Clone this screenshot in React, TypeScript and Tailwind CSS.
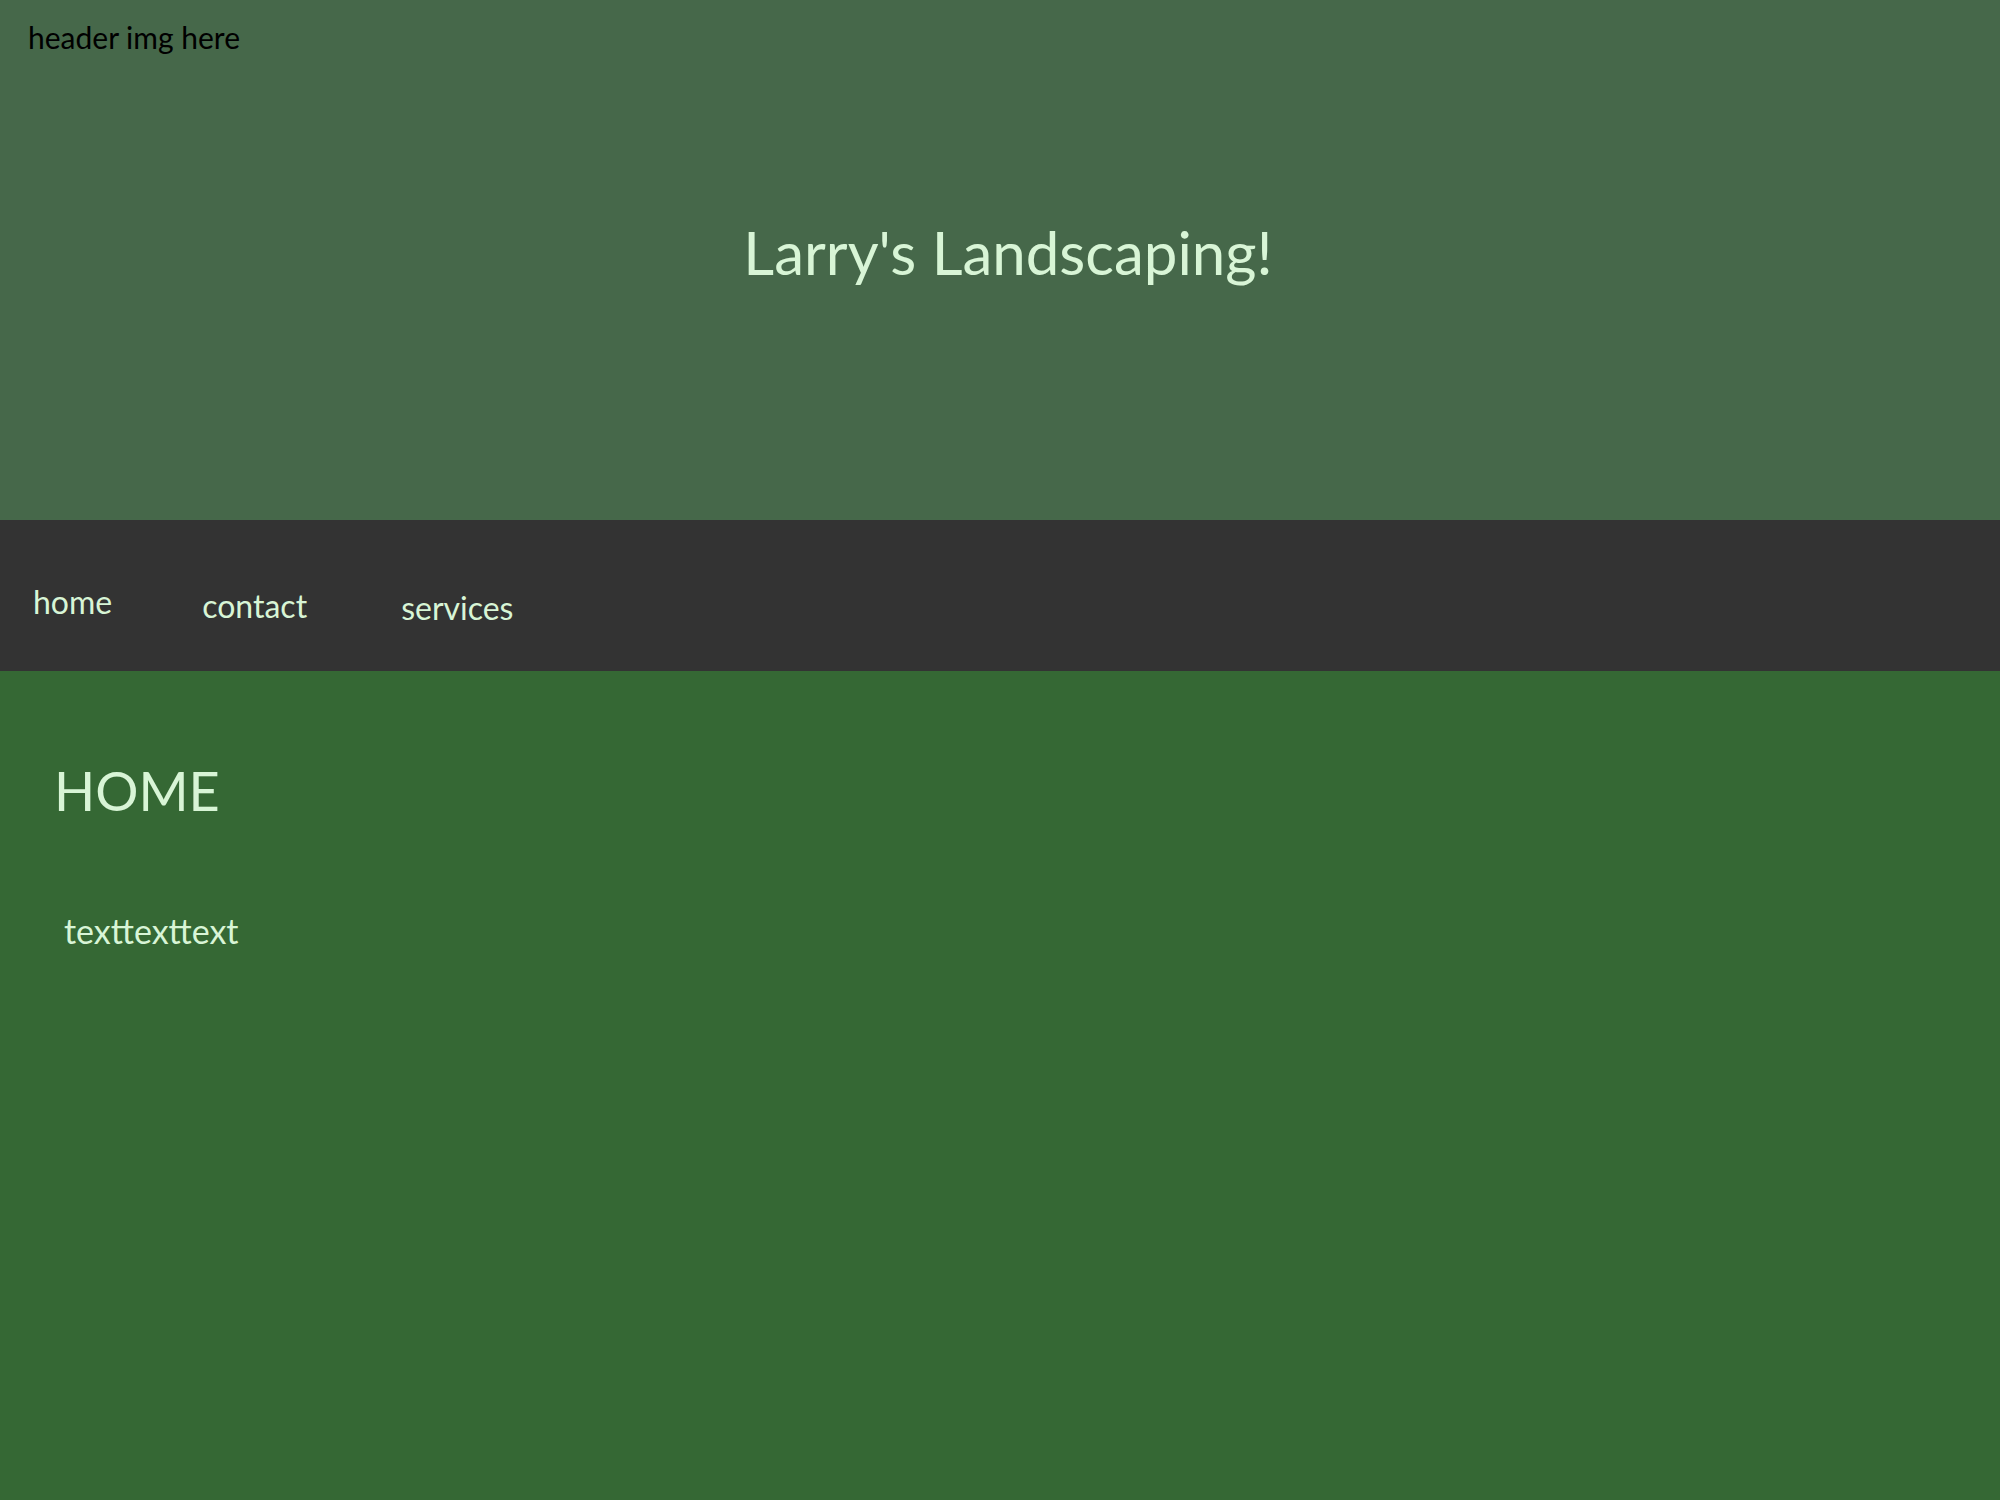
const font = "font-['Lato','Liberation_Sans',sans-serif]";

const navLinks = [
  { label: "home", cls: "ml-[33px] mt-[-8px]" },
  { label: "contact", cls: "ml-[90px] mt-[0px]" },
  { label: "services", cls: "ml-[94px] mt-[4px]" },
];

export default function App() {
  return (
    <div className={`${font} min-h-[1500px] w-full bg-[#356834]`}>
      {/* header image placeholder + title */}
      <header className="flex h-[520px] flex-col bg-[#46684a]">
        <p className="pl-[28px] pt-[18px] text-[30px] leading-[38px] text-black">header img here</p>
        <div className="flex justify-center pl-[16px] pt-[162px]">
          <h1 className="text-[60px] leading-[68px] text-[#d8f5d6]">Larry's Landscaping!</h1>
        </div>
      </header>

      <nav className="flex h-[151px] items-center bg-[#333333] pt-[20px]">
        {navLinks.map((l) => (
          <a key={l.label} href="#" className={`${l.cls} text-[32px] leading-[40px] text-[#d8f5d6]`}>
            {l.label}
          </a>
        ))}
      </nav>

      <main className="flex flex-col px-[54px] pt-[89px]">
        <h2 className="text-[54px] leading-[62px] text-[#d8f5d6]">HOME</h2>
        <p className="mt-[88px] pl-[10px] text-[34px] leading-[42px] text-[#d8f5d6]">texttexttext</p>
      </main>
    </div>
  );
}
